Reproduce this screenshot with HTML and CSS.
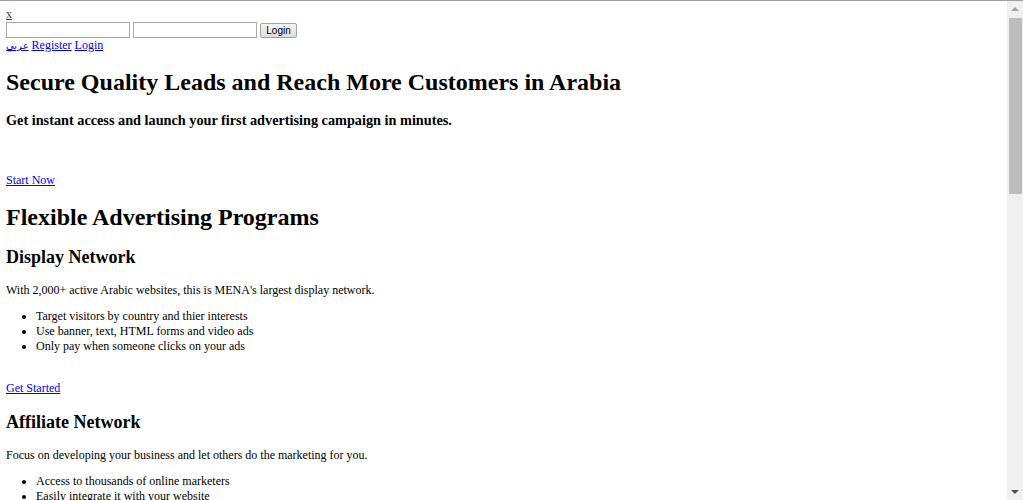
FILE: index.html
```html
<!DOCTYPE html>
<html lang="en">
<head>
<meta charset="utf-8">
<title>Arabia Leads</title>
<link rel="stylesheet" href="styles.css">
</head>
<body>
<div class="topbar">
  <a href="#" class="close visited">x</a>
  <form class="login-form">
    <input type="text" class="field"> <input type="password" class="field"> <button type="button" class="btn">Login</button>
  </form>
  <div class="nav"><a href="#" lang="ar" class="arabic">عربي</a> <a href="#">Register</a> <a href="#">Login</a></div>
</div>

<h1 class="title">Secure Quality Leads and Reach More Customers in Arabia</h1>
<h3 class="subtitle">Get instant access and launch your first advertising campaign in minutes.</h3>
<p class="cta cta-top"><a href="#">Start Now</a></p>

<h1 class="title">Flexible Advertising Programs</h1>

<h2 class="section">Display Network</h2>
<p class="text">With 2,000+ active Arabic websites, this is MENA's largest display network.</p>
<ul class="list">
  <li>Target visitors by country and thier interests</li>
  <li>Use banner, text, HTML forms and video ads</li>
  <li>Only pay when someone clicks on your ads</li>
</ul>
<p class="cta"><a href="#">Get Started</a></p>

<h2 class="section">Affiliate Network</h2>
<p class="text">Focus on developing your business and let others do the marketing for you.</p>
<ul class="list">
  <li>Access to thousands of online marketers</li>
  <li>Easily integrate it with your website</li>
  <li>Only pay for leads and sales</li>
</ul>
<p class="cta"><a href="#">Get Started</a></p>

<h2 class="section">Search Network</h2>
<p class="text">Reach people searching in Arabic for the products and services you offer.</p>
<ul class="list">
  <li>Show your ads next to relevant search results</li>
  <li>Choose your own keywords and budget</li>
  <li>Track every click and conversion</li>
</ul>
<p class="cta"><a href="#">Get Started</a></p>

<h1 class="title">Why Advertise With Us</h1>
<h2 class="section">Targeted Audience</h2>
<p class="text">Millions of Arabic speaking visitors every month across the Middle East and North Africa.</p>
<h2 class="section">Real-time Reports</h2>
<p class="text">Monitor your campaigns and optimize them with detailed statistics.</p>
<h2 class="section">Dedicated Support</h2>
<p class="text">Our team is ready to help you in Arabic and English.</p>
<p class="cta"><a href="#">Start Now</a></p>

<h1 class="title">Publishers</h1>
<p class="text">Monetize your Arabic website and earn money from every visitor.</p>
<p class="cta"><a href="#">Join Now</a></p>

<div class="footer">
  <a href="#">About</a> <a href="#">Contact</a> <a href="#">Terms</a> <a href="#">Privacy</a>
  <p class="text">&copy; Arabia Leads</p>
</div>

<div class="scrollbar" aria-hidden="true">
  <span class="sb-arrow sb-up"></span>
  <span class="sb-track"><span class="sb-thumb"></span></span>
  <span class="sb-arrow sb-down"></span>
</div>
</body>
</html>
```

FILE: styles.css
```css
html {
  border-top: 1px solid #a0a0a0;
}
body {
  margin: 6px;
  font-family: "Liberation Serif", "Times New Roman", serif;
  font-size: 12px;
  line-height: 14px;
  color: #000;
}
a {
  color: #0000ee;
}
a.visited {
  color: #551a8b;
}
.arabic {
  font-family: "DejaVu Sans", sans-serif;
  font-size: 10px;
  line-height: 8px;
}
.topbar {
  line-height: 14px;
}
.login-form {
  margin: 1px 0 0;
  display: flex;
  align-items: center;
  gap: 3px;
  height: 16px;
}
.field {
  box-sizing: border-box;
  width: 124px;
  height: 16px;
  margin: 0;
  padding: 0 2px;
  border: 1px solid #a9a9a9;
  background: #fff;
  font-size: 10px;
}
.btn {
  box-sizing: border-box;
  width: 37px;
  height: 15px;
  margin: 0;
  padding: 0;
  border: 1px solid #a3a3a3;
  border-radius: 2px;
  background: linear-gradient(#f4f4f4, #dedede);
  font-family: "Liberation Sans", Arial, sans-serif;
  font-size: 10px;
  line-height: 13px;
  color: #000;
}
.title {
  font-size: 24px;
  line-height: 28px;
  margin: 16px 0;
}
.subtitle {
  font-size: 14.25px;
  line-height: 16px;
  margin: 14px 0;
}
.section {
  font-size: 18px;
  line-height: 21px;
  margin: 15px 0;
}
.text {
  margin: 12px 0;
}
.cta {
  margin: 27px 0 17px;
}
.cta-top {
  margin: 45px 0 16px;
}
.list {
  margin: 12px 0;
  padding-left: 30px;
}
.list li {
  line-height: 15px;
}
.footer {
  margin-top: 24px;
}

/* simulated browser scrollbar overlay */
.scrollbar {
  position: fixed;
  top: 1px;
  right: 0;
  bottom: 0;
  width: 16px;
  background: #f0f0f0;
  display: flex;
  flex-direction: column;
}
.sb-arrow {
  height: 16px;
  flex: none;
  display: flex;
  align-items: center;
  justify-content: center;
}
.sb-arrow::before {
  content: "";
  width: 0;
  height: 0;
  border-left: 4px solid transparent;
  border-right: 4px solid transparent;
}
.sb-up::before {
  border-bottom: 4px solid #a3a3a3;
}
.sb-down::before {
  border-top: 4px solid #505050;
}
.sb-track {
  flex: 1;
  display: flex;
  flex-direction: column;
  padding: 1px 1px 0 2px;
}
.sb-thumb {
  height: 176px;
  background: #bdbdbd;
}
```
